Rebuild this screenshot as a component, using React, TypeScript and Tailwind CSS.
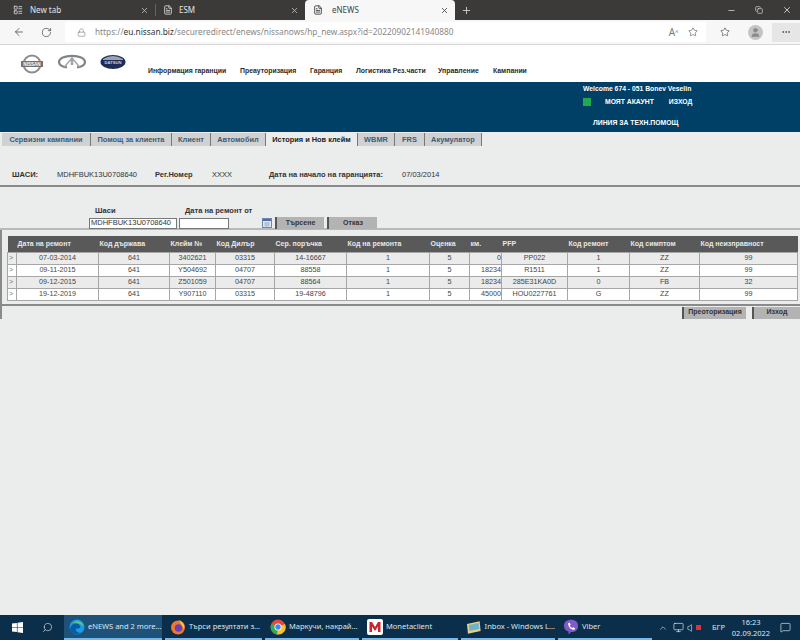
import { ArrowLeft, ChevronUp, Copy, FileText, LayoutList, Lock, MessageSquare, Minus, Monitor, MoreHorizontal, Plus, RotateCw, Search, Star, User, Volume, X } from "lucide-react";

const arial = "font-['Liberation_Sans',Arial,sans-serif]";
const noto = "font-['Noto_Sans',sans-serif]";

const NAV = [
  ["Информация гаранции", "w-[92px]"],
  ["Преауторизация", "w-[70px]"],
  ["Гаранция", "w-[46px]"],
  ["Логистика Рез.части", "w-[82px]"],
  ["Управление", "w-[55px]"],
  ["Кампании", "w-[40px]"],
];

const TABS = [
  ["Сервизни кампании", "w-[89px]"],
  ["Помощ за клиента", "w-[81px]"],
  ["Клиент", "w-[39px]"],
  ["Автомобил", "w-[55px]"],
  ["История и Нов клейм", "w-[92px]"],
  ["WBMR", "w-[37px]"],
  ["FRS", "w-[30px]"],
  ["Акумулатор", "w-[57px]"],
];

const COLS = [
  ["", "w-[9px]"],
  ["Дата на ремонт", "w-[82px]"],
  ["Код държава", "w-[71px]"],
  ["Клейм №", "w-[46px]"],
  ["Код Дилър", "w-[59px]"],
  ["Сер. поръчка", "w-[72px]"],
  ["Код на ремонта", "w-[83px]"],
  ["Оценка", "w-[40px]"],
  ["км.", "w-[32px]"],
  ["PFP", "w-[66px]"],
  ["Код ремонт", "w-[62px]"],
  ["Код симптом", "w-[70px]"],
  ["Код неизправност", "w-[98px]"],
];

const ROWS = [
  ["07-03-2014", "641", "3402621", "03315", "14-16667", "1", "5", "0", "PP022", "1", "ZZ", "99"],
  ["09-11-2015", "641", "Y504692", "04707", "88558", "1", "5", "18234", "R1511", "1", "ZZ", "99"],
  ["09-12-2015", "641", "Z501059", "04707", "88564", "1", "5", "18234", "285E31KA0D", "0", "FB", "32"],
  ["19-12-2019", "641", "Y907110", "03315", "19-48796", "1", "5", "45000", "HOU0227761", "G", "ZZ", "99"],
];

function NissanLogo() {
  return (
    <svg width="24" height="20" viewBox="0 0 24 20">
      <circle cx="12" cy="10" r="8.5" fill="none" stroke="#8b8f93" strokeWidth="2" />
      <rect x="1" y="7" width="22" height="6" fill="#6f7376" />
      <text x="12" y="12" textAnchor="middle" fontSize="4.6" fontWeight="700" fill="#fff" fontFamily="Liberation Sans">NISSAN</text>
    </svg>
  );
}

function InfinitiLogo() {
  return (
    <svg width="28" height="16" viewBox="0 0 28 16">
      <path d="M9 13.4 C3.5 12.6 1 10.5 1 8 C1 4.4 6.8 1.8 14 1.8 C21.2 1.8 27 4.4 27 8 C27 10.5 24.5 12.6 19 13.4" fill="none" stroke="#808488" strokeWidth="2.2" />
      <path d="M6.5 13 L13.4 4.5 L13.4 11 M21.5 13 L14.6 4.5 L14.6 11" fill="none" stroke="#a3a6a9" strokeWidth="1.4" />
    </svg>
  );
}

function DatsunLogo() {
  return (
    <svg width="26" height="16" viewBox="0 0 26 16">
      <ellipse cx="13" cy="8" rx="12.5" ry="7" fill="#1f2c55" />
      <path d="M3 5 Q13 -1 23 5 L23 6 L3 6Z" fill="#9aa3b5" />
      <text x="13" y="10" textAnchor="middle" fontSize="4.2" fontWeight="700" fill="#c9cede" fontFamily="Liberation Sans">DATSUN</text>
    </svg>
  );
}

function CalendarIcon() {
  return (
    <svg width="10" height="10" viewBox="0 0 10 10">
      <rect x=".5" y=".5" width="9" height="9" fill="#dfe6f2" stroke="#6f86ad" />
      <rect x="1" y="1" width="8" height="2" fill="#4f6fa8" />
      <path d="M2 5 H8 M2 7 H8 M4 4 V9 M6 4 V9" stroke="#8ea3c6" strokeWidth=".6" />
    </svg>
  );
}

function EdgeIcon() {
  return (
    <svg width="16" height="16" viewBox="0 0 16 16">
      <circle cx="8" cy="8" r="7.5" fill="#1b9de2" />
      <path d="M1 10 C2 4 9 3 11 7 C12 9 9 10 7 9.5 C6 13 10 15 13 13 C9 17 2 15 1 10Z" fill="#0c59a4" />
      <path d="M4 4 C8 0 14 3 15 8 C13 5 7 3 4 4Z" fill="#5ed06b" />
    </svg>
  );
}

function FirefoxIcon() {
  return (
    <svg width="16" height="16" viewBox="0 0 16 16">
      <circle cx="8" cy="8.5" r="7" fill="#f0772b" />
      <circle cx="8.5" cy="9" r="3.8" fill="#6b3fb5" />
      <path d="M9 1 C13 3 15 6 14 10 L11 5Z" fill="#ffc53d" />
    </svg>
  );
}

function ChromeIcon() {
  return (
    <svg width="16" height="16" viewBox="0 0 16 16">
      <circle cx="8" cy="8" r="7.5" fill="#e8453c" />
      <path d="M8 8 L1.5 4.5 A7.5 7.5 0 0 0 7 15.5Z" fill="#34a853" />
      <path d="M8 8 L15 5 A7.5 7.5 0 0 1 7 15.5Z" fill="#fbc02d" />
      <circle cx="8" cy="8" r="3.6" fill="#fff" />
      <circle cx="8" cy="8" r="2.7" fill="#4285f4" />
    </svg>
  );
}

function MonetaIcon() {
  return (
    <svg width="16" height="16" viewBox="0 0 16 16">
      <rect width="16" height="16" rx="2" fill="#fff" />
      <path d="M2.5 13 V3 H5 L8 8 L11 3 H13.5 V13 H11 V7.5 L8 12 L5 7.5 V13Z" fill="#c9252c" />
    </svg>
  );
}

function InboxIcon() {
  return (
    <svg width="16" height="16" viewBox="0 0 16 16">
      <path d="M1 5 L14 2 L15 12 L2 15Z" fill="#e6cf86" />
      <path d="M3 6 L13 4 L13.5 10 L3.5 12Z" fill="#6fb3c9" />
    </svg>
  );
}

function ViberIcon() {
  return (
    <svg width="16" height="16" viewBox="0 0 16 16">
      <path d="M8 .8 C12.5 .8 15 3 15 7 C15 11 12.5 13 8 13 L5.5 15.4 V12.6 C2.5 11.8 1 10 1 7 C1 3 3.5 .8 8 .8Z" fill="#7f5bc6" />
      <path d="M5.2 4 L6.8 3.8 L7.6 5.8 L6.8 6.8 C7.2 7.8 8 8.6 9.2 9.1 L10.2 8.3 L12 9.2 L11.6 10.8 C8 11 4.8 7.8 5.2 4Z" fill="#fff" />
    </svg>
  );
}

function WindowsIcon() {
  return (
    <svg width="11" height="11" viewBox="0 0 11 11" fill="#fff">
      <path d="M0 1.6 L4.9 .9 V5.2 H0Z M5.5 .8 L11 0 V5.2 H5.5Z M0 5.8 H4.9 V10.1 L0 9.4Z M5.5 5.8 H11 V11 L5.5 10.2Z" />
    </svg>
  );
}

function BrowserTab({ label, active, icon, width }: { label: string; active?: boolean; icon: React.ReactNode; width: string }) {
  return (
    <div className={`flex h-5 items-center pr-[6px] text-[8px] ${width} ${active ? "rounded-t-[4px] bg-[#f7f7f7] text-[#444]" : "text-[#e4e4e4]"}`}>
      {icon}
      <span className="flex-1">{label}</span>
      <X className={`h-[9px] w-[9px] ${active ? "text-[#333]" : "text-[#ccc]"}`} strokeWidth={2} />
    </div>
  );
}

function GrayButton({ label, width }: { label: string; width: string }) {
  return (
    <div className={`flex h-[12px] items-center justify-center border-l-2 border-[#555] bg-[#b3b3b3] text-[7px] font-bold text-[#333] ${width}`}>
      {label}
    </div>
  );
}

function TaskItem({ label, icon, width, active }: { label: string; icon: React.ReactNode; width: string; active?: boolean }) {
  return (
    <div className={`flex h-[25px] items-center gap-[3px] border-b-2 border-[#76b9ed] pl-[5px] text-[7.5px] text-[#dfe6ec] ${width} ${active ? "bg-[#1f5279]" : ""}`}>
      {icon}
      <span className="whitespace-nowrap">{label}</span>
    </div>
  );
}

export default function App() {
  return (
    <div className={`flex h-[640px] w-[800px] flex-col overflow-hidden bg-[#ebecec] ${arial}`}>
      {/* Browser tabs */}
      <div className={`flex h-5 items-center bg-[#3b3a39] ${noto}`}>
        <BrowserTab label="New tab" width="w-[155px]" icon={<LayoutList className="ml-[13px] mr-[7px] h-[10px] w-[10px] text-[#ddd]" />} />
        <div className="h-3 w-px bg-[#666]" />
        <BrowserTab label="ESM" width="w-[149px]" icon={<FileText className="ml-[7px] mr-[6px] h-[10px] w-[10px] text-[#ddd]" />} />
        <BrowserTab label="eNEWS" width="w-[150px]" active icon={<FileText className="ml-[8px] mr-[9px] h-[10px] w-[10px] text-[#333]" />} />
        <Plus className="ml-[6px] h-[11px] w-[11px] text-[#ccc]" />
        <div className="ml-auto flex items-center gap-[19px] pr-[8px] text-[#ddd]">
          <Minus className="h-[9px] w-[9px]" />
          <Copy className="h-[8px] w-[8px]" />
          <X className="h-[10px] w-[10px]" />
        </div>
      </div>

      {/* Address bar */}
      <div className={`flex h-[25px] items-center border-b border-[#d6d6d6] bg-[#f7f7f7] ${noto}`}>
        <ArrowLeft className="ml-[13px] h-[12px] w-[12px] text-[#444]" strokeWidth={1.5} />
        <RotateCw className="ml-[16px] h-[11px] w-[11px] text-[#444]" strokeWidth={1.5} />
        <div className="ml-[13px] flex h-[20px] w-[644px] items-center bg-white">
          <Lock className="ml-[12px] h-[9px] w-[9px] text-[#777]" strokeWidth={1.5} />
          <span className="ml-[9px] whitespace-nowrap text-[8.3px] text-[#888]">
            https://<span className="text-[#333]">eu.nissan.biz</span>/secureredirect/enews/nissanows/hp_new.aspx?id=20220902141940880
          </span>
          <span className="ml-auto text-[10px] text-[#777]">A<sup className="text-[5px]">ℵ</sup></span>
          <Star className="ml-[10px] mr-[8px] h-[10px] w-[10px] text-[#555]" strokeWidth={1.5} />
        </div>
        <Star className="ml-[14px] h-[10px] w-[10px] text-[#444]" strokeWidth={1.5} />
        <div className="ml-[18px] flex h-[15px] w-[15px] items-center justify-center rounded-full bg-[#c4c4c4]">
          <User className="h-[11px] w-[11px] fill-[#8a8a8a] text-[#8a8a8a]" />
        </div>
        <div className="ml-[9px] flex h-[19px] w-[28px] items-center justify-center bg-[#e6e6e6]">
          <MoreHorizontal className="h-[10px] w-[10px] text-[#444]" />
        </div>
      </div>

      {/* Portal header */}
      <div className="flex h-[37px] bg-white">
        <div className="flex w-[148px] items-start gap-[14px] pl-[20px] pt-[9px]">
          <NissanLogo />
          <InfinitiLogo />
          <DatsunLogo />
        </div>
        <div className="flex pt-[21px] text-[6.9px] font-bold text-[#2b2b2b]">
          {NAV.map(([label, width]) => (
            <span key={label} className={`whitespace-nowrap ${width}`}>{label}</span>
          ))}
        </div>
      </div>

      {/* Blue band */}
      <div className="h-[50px] bg-[#003f66] pl-[583px] pt-[2px] text-[6.8px] font-bold text-white">
        <div className="leading-[9px]">Welcome 674 - 051 Bonev Veselin</div>
        <div className="mt-[4px] flex items-center">
          <span className="h-[8px] w-[8px] bg-[#22a84f]" />
          <span className="ml-[14px]">МОЯТ АКАУНТ</span>
          <span className="ml-[15px]">ИЗХОД</span>
        </div>
        <div className="ml-[10px] mt-[11px]">ЛИНИЯ ЗА ТЕХН.ПОМОЩ</div>
      </div>

      {/* Tabs */}
      <div className="flex h-[14px] pl-[2px] pt-px text-[7.4px] font-bold">
        {TABS.map(([label, width]) => (
          <div
            key={label}
            className={`flex items-center justify-center whitespace-nowrap border-r border-[#777] ${width} ${label === "История и Нов клейм" ? "bg-[#ebecec] text-[#222]" : "bg-[#cfd1d2] text-[#3f5b72]"}`}
          >
            {label}
          </div>
        ))}
      </div>

      {/* Vehicle info */}
      <div className="flex h-[41px] items-end border-b-2 border-[#8a8a8a] pb-[5px] text-[7.5px] text-[#333]">
        <span className="ml-[12px] w-[45px] font-bold">ШАСИ:</span>
        <span className="w-[98px]">MDHFBUK13U0708640</span>
        <span className="w-[57px] font-bold">Рег.Номер</span>
        <span className="w-[57px]">XXXX</span>
        <span className="w-[133px] font-bold">Дата на начало на гаранцията:</span>
        <span>07/03/2014</span>
      </div>

      {/* Search */}
      <div className="h-[43px] border-b-2 border-[#b9b9b9] text-[7.5px] text-[#333]">
        <div className="flex pt-[19px] font-bold leading-[9px]">
          <span className="ml-[95px] w-[90px]">Шаси</span>
          <span>Дата на ремонт от</span>
        </div>
        <div className="mt-[2px] flex items-center">
          <div className="ml-[89px] flex h-[11px] w-[88px] items-center border border-[#777] bg-white pl-[1px]">MDHFBUK13U0708640</div>
          <div className="ml-[2px] h-[11px] w-[50px] border border-[#777] bg-white" />
          <div className="ml-[33px] flex">
            <CalendarIcon />
          </div>
          <div className="ml-[3px] flex gap-[3px]">
            <GrayButton label="Търсене" width="w-[49px]" />
            <GrayButton label="Отказ" width="w-[50px]" />
          </div>
        </div>
      </div>

      {/* Claims table */}
      <div className="border-l-2 border-[#8a8a8a]">
        <div className="pb-[3px] pl-[5px] pr-[3px] pt-[6px]">
          <table className="w-[790px] table-fixed border-collapse text-[7.2px] text-[#444]">
            <thead>
              <tr className="h-[16px] bg-[#595959] text-left text-[7px] font-bold text-[#e8e8e8]">
                {COLS.map(([label, width], i) => (
                  <th key={i} className={`px-[1px] font-bold ${width}`}>{label}</th>
                ))}
              </tr>
            </thead>
            <tbody>
              {ROWS.map((row, r) => (
                <tr key={r} className={`h-[12px] ${r % 2 === 0 ? "bg-[#ebebeb]" : "bg-white"}`}>
                  <td className="border border-[#a6a6a6] pl-[1px] text-[#777]">&gt;</td>
                  {row.map((cell, c) => (
                    <td key={c} className={`border border-[#a6a6a6] px-0 leading-[10px] ${c === 7 ? "text-right" : "text-center"}`}>{cell}</td>
                  ))}
                </tr>
              ))}
            </tbody>
          </table>
        </div>
        <div className="border-t-2 border-[#8a8a8a]" />
        <div className="flex justify-end gap-[6px] pt-px">
          <GrayButton label="Преоторизация" width="w-[64px]" />
          <GrayButton label="Изход" width="w-[48px]" />
        </div>
      </div>

      <div className="flex-1" />

      {/* Windows taskbar */}
      <div className={`flex h-[25px] items-center bg-[#0b2e4a] ${noto}`}>
        <div className="ml-[12px] flex w-[30px] items-center">
          <WindowsIcon />
        </div>
        <Search className="h-[11px] w-[11px] -scale-x-100 text-[#cfd8df]" strokeWidth={1.5} />
        <div className="ml-[11px] flex gap-[3px]">
          <TaskItem label="eNEWS and 2 more..." width="w-[98px]" active icon={<EdgeIcon />} />
          <TaskItem label="Търси резултати з..." width="w-[97px]" icon={<FirefoxIcon />} />
          <TaskItem label="Маркучи, накрай..." width="w-[94px]" icon={<ChromeIcon />} />
          <TaskItem label="Monetaclient" width="w-[96px]" icon={<MonetaIcon />} />
          <TaskItem label="Inbox - Windows L..." width="w-[94px]" icon={<InboxIcon />} />
          <TaskItem label="Viber" width="w-[94px]" icon={<ViberIcon />} />
        </div>
        <div className="ml-[6px] flex items-center text-[7.5px] text-[#dfe6ec]">
          <ChevronUp className="h-[10px] w-[10px]" strokeWidth={1.5} />
          <Monitor className="ml-[5px] h-[11px] w-[11px]" strokeWidth={1.5} />
          <span className="ml-[3px] flex items-center">
            <Volume className="h-[10px] w-[10px]" strokeWidth={1.5} />
            <span className="-ml-[1px] h-[5px] w-[5px] bg-[#d9343a]" />
          </span>
          <span className="ml-[11px]">БГР</span>
          <div className="ml-[8px] flex w-[36px] flex-col items-center leading-[11px]">
            <span>16:23</span>
            <span>02.09.2022</span>
          </div>
          <MessageSquare className="ml-[11px] h-[11px] w-[11px]" strokeWidth={1.5} />
        </div>
      </div>
    </div>
  );
}
